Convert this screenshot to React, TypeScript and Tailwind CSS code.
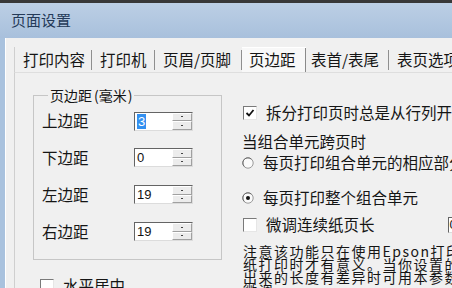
import React from "react"

const tabs = [
  { label: "打印内容", w: "w-[77px]", pl: "pl-[8px]" },
  { label: "打印机", w: "w-[63px]", pl: "pl-[8px]" },
  { label: "页眉/页脚", w: "w-[87px]", pl: "pl-[8px]" },
  { label: "页边距", w: "w-[64px]", pl: "pl-[7px]", active: true },
  { label: "表首/表尾", w: "w-[83px]", pl: "pl-[5px]" },
  { label: "表页选项", w: "w-[80px]", pl: "pl-[8px]" },
]

const margins = [
  { label: "上边距", value: "3", selected: true },
  { label: "下边距", value: "0" },
  { label: "左边距", value: "19" },
  { label: "右边距", value: "19" },
]

function Spinner() {
  return (
    <div className="w-[20px] shrink-0 flex flex-col bg-[#ececec]">
      <div className="flex-1 border border-t-white border-l-white border-r-[#a0a0a0] border-b-[#a0a0a0] flex items-center justify-center">
        <div className="w-[2px] h-[1px] bg-[#444]" />
      </div>
      <div className="flex-1 border border-t-white border-l-white border-r-[#a0a0a0] border-b-[#a0a0a0] flex items-center justify-center">
        <div className="w-[2px] h-[1px] bg-[#444]" />
      </div>
    </div>
  )
}

function NumberInput({ value, selected }: { value: string; selected?: boolean }) {
  return (
    <div className="flex shrink-0 w-[59px] h-[19px] border border-t-[#646464] border-l-[#646464] border-r-[#dcdcdc] border-b-[#dcdcdc] bg-white">
      <div className="flex-1 flex items-center pl-[2px] text-[13px] font-['Liberation_Sans',sans-serif] text-[#111]">
        {selected ? (
          <span className="bg-[#3390f0] text-white px-[1px] leading-[15px]">{value}</span>
        ) : (
          <span>{value}</span>
        )}
      </div>
      <Spinner />
    </div>
  )
}

function Checkbox({ checked }: { checked?: boolean }) {
  return (
    <div className="w-[14px] h-[14px] shrink-0 border border-t-[#7a7a7a] border-l-[#7a7a7a] border-r-[#e6e6e6] border-b-[#e6e6e6] bg-white flex items-center justify-center">
      {checked && (
        <svg width="10" height="10" viewBox="0 0 10 10">
          <path d="M1.5 5 L4 7.5 L8.5 2" fill="none" stroke="#111" strokeWidth="1.8" />
        </svg>
      )}
    </div>
  )
}

function Radio({ checked }: { checked?: boolean }) {
  return (
    <svg width="12" height="12" viewBox="0 0 12 12" className="shrink-0">
      <circle cx="6" cy="6" r="5.2" fill="#fafafa" stroke="#9a9a9a" strokeWidth="1" />
      <path d="M2.3 9.5 A5 5 0 0 1 9.5 2.3" fill="none" stroke="#6a6a6a" strokeWidth="1" />
      {checked && <circle cx="6" cy="6" r="2" fill="#111" />}
    </svg>
  )
}

export default function App() {
  return (
    <div className="w-[452px] h-[288px] overflow-hidden flex flex-col bg-[#f0f0f0] font-['Noto_Sans_CJK_SC',sans-serif] text-[#151515]">
      <div className="h-[3px] shrink-0 bg-[#383838]" />
      <div className="h-[35px] shrink-0 bg-gradient-to-b from-[#bccfe5] to-[#a8c0dc] flex items-center pl-[11px] text-[15px] text-[#243a58]">
        页面设置
      </div>
      <div className="flex flex-1 min-h-0">
        <div className="w-[5px] shrink-0 bg-[#a9c2de]" />
        <div className="w-px shrink-0 bg-white" />
        <div className="flex-1 min-w-0 flex flex-col pt-[9px] pl-[8px]">
          <div className="flex h-[25px] shrink-0 border-l border-[#cfcfcf] text-[15.5px] whitespace-nowrap">
            {tabs.map((t) => (
              <div
                key={t.label}
                className={`${t.w} shrink-0 flex items-center justify-between ${t.pl} ${t.active ? "bg-[#f8f8f8] border-t border-white" : ""}`}
              >
                <span>{t.label}</span>
                <div className={`w-px ${t.active ? "h-[24px] self-end bg-[#8a8a8a]" : "h-[20px] bg-[#8f8f8f]"}`} />
              </div>
            ))}
          </div>
          <div className="flex-1 min-h-0 flex border-t border-l border-t-[#dedede] border-l-[#cfcfcf]">
            <div className="w-[18px] shrink-0" />
            <div className="w-[189px] shrink-0 flex flex-col">
              <fieldset className="mt-[14px] border border-[#c6c6c6] px-[8px] pb-[9px]">
                <legend className="ml-[6px] px-[2px] text-[14px] leading-[16px]">
                  页边距<span className="ml-[2px]">(</span>毫米<span className="ml-[1px]">)</span>
                </legend>
                {margins.map((m, i) => (
                  <div
                    key={m.label}
                    className={`flex items-center justify-between pr-[20px] ${i === 0 ? "h-[36px]" : "h-[37px]"}`}
                  >
                    <span className="text-[15.5px]">{m.label}</span>
                    <NumberInput value={m.value} selected={m.selected} />
                  </div>
                ))}
              </fieldset>
              <div className="mt-[14px] ml-[7px] flex items-center gap-[9px] text-[15.5px] whitespace-nowrap">
                <Checkbox />
                <span>水平居中</span>
              </div>
            </div>
            <div className="w-[20px] shrink-0" />
            <div className="flex-1 min-w-0 flex flex-col pt-[30px] text-[15.5px] whitespace-nowrap overflow-hidden">
              <div className="h-[20px] flex items-center gap-[9px] pl-[1px]">
                <Checkbox checked />
                <span>拆分打印页时总是从行列开始</span>
              </div>
              <div className="h-[20px] mt-[9px] flex items-center">当组合单元跨页时</div>
              <div className="h-[20px] mt-[1px] flex items-center gap-[9px]">
                <Radio />
                <span>每页打印组合单元的相应部分</span>
              </div>
              <div className="h-[20px] mt-[15px] flex items-center gap-[9px]">
                <Radio checked />
                <span>每页打印整个组合单元</span>
              </div>
              <div className="h-[20px] mt-[7px] flex items-center pl-[1px]">
                <Checkbox />
                <span className="ml-[9px] shrink-0">微调连续纸页长</span>
                <div className="ml-[73px] shrink-0 w-[40px] h-[16px] border border-t-[#646464] border-l-[#646464] border-r-[#dcdcdc] border-b-[#dcdcdc] bg-white flex items-center pl-[1px] text-[13px] font-['Liberation_Sans',sans-serif]">
                  0
                </div>
              </div>
              <div className="mt-[10px] pl-[1px] text-[14px] leading-[13px] tracking-[1.5px]">
                <div>注意该功能只在使用Epson打印机</div>
                <div>纸打印时才有意义。当你设置的</div>
                <div>出来的长度有差异时可用本参数</div>
                <div>微调。</div>
              </div>
            </div>
          </div>
        </div>
      </div>
    </div>
  )
}
